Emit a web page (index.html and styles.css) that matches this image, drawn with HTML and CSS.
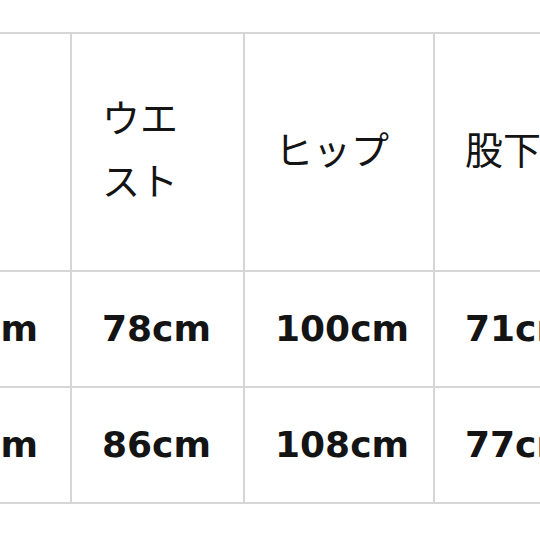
FILE: index.html
```html
<!DOCTYPE html>
<html lang="ja">
<head>
<meta charset="utf-8">
<link rel="stylesheet" href="styles.css">
</head>
<body>
<div class="page">
  <div class="table">
    <div class="cell head"><span class="jp blank">総丈</span></div>
    <div class="cell head"><span class="jp">ウエスト</span></div>
    <div class="cell head"><span class="jp">ヒップ</span></div>
    <div class="cell head"><span class="jp">股下</span></div>

    <div class="cell"><span class="num">96cm</span></div>
    <div class="cell"><span class="num">78cm</span></div>
    <div class="cell"><span class="num">100cm</span></div>
    <div class="cell"><span class="num">71cm</span></div>

    <div class="cell"><span class="num">99cm</span></div>
    <div class="cell"><span class="num">86cm</span></div>
    <div class="cell"><span class="num">108cm</span></div>
    <div class="cell"><span class="num">77cm</span></div>
  </div>
</div>
</body>
</html>
```

FILE: styles.css
```css
html, body {
  margin: 0;
  padding: 0;
  background: #ffffff;
}

.page {
  width: 540px;
  height: 540px;
  overflow: hidden;
  padding-top: 32px;
  box-sizing: border-box;
}

.table {
  display: grid;
  grid-template-columns: 171px 171px 188px 200px;
  grid-template-rows: 236px 114px 114px;
  gap: 2px;
  padding: 2px;
  background: #d6d6d6;
  width: max-content;
  margin-left: -103px;
}

.cell {
  background: #ffffff;
  display: flex;
  align-items: center;
  padding: 0 30px;
  color: #141414;
  overflow: hidden;
}

.head {
  padding-bottom: 10px;
}

.blank {
  visibility: hidden;
}

.jp {
  font-family: "Noto Sans CJK JP", sans-serif;
  font-size: 38px;
  line-height: 63px;
  font-weight: 400;
}

.num {
  font-family: "DejaVu Sans", sans-serif;
  font-weight: 700;
  font-size: 36px;
  line-height: 1;
  white-space: nowrap;
}
```
